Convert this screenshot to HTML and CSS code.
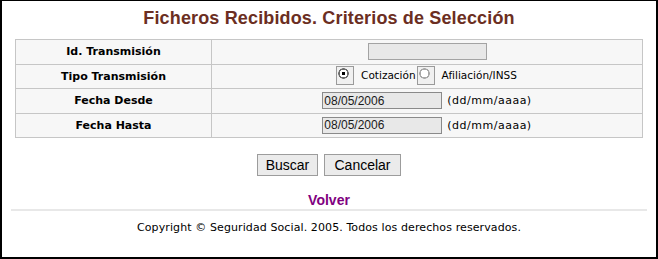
FILE: index.html
```html
<!DOCTYPE html>
<html lang="es">
<head>
<meta charset="utf-8">
<title>Ficheros Recibidos</title>
<link rel="stylesheet" href="styles.css">
</head>
<body>
<div class="frame">
  <h1 class="title">Ficheros Recibidos. Criterios de Selección</h1>
  <table class="criteria">
    <tr>
      <th class="label">Id. Transmisión</th>
      <td class="value"><input class="field field-id" type="text"></td>
    </tr>
    <tr>
      <th class="label">Tipo Transmisión</th>
      <td class="value">
        <span class="radios">
          <input class="radio" type="radio" name="tipo" checked><span class="opt">Cotización</span><input class="radio" type="radio" name="tipo"><span class="opt">Afiliación/INSS</span>
        </span>
      </td>
    </tr>
    <tr>
      <th class="label">Fecha Desde</th>
      <td class="value"><input class="field field-date" type="text" value="08/05/2006"><span class="hint">(dd/mm/aaaa)</span></td>
    </tr>
    <tr>
      <th class="label">Fecha Hasta</th>
      <td class="value"><input class="field field-date" type="text" value="08/05/2006"><span class="hint">(dd/mm/aaaa)</span></td>
    </tr>
  </table>
  <div class="actions">
    <button class="btn btn-buscar" type="button">Buscar</button>
    <button class="btn btn-cancelar" type="button">Cancelar</button>
  </div>
  <div class="back"><a class="back-link" href="#">Volver</a></div>
  <div class="rule"></div>
  <p class="copyright">Copyright © Seguridad Social. 2005. Todos los derechos reservados.</p>
</div>
</body>
</html>
```

FILE: styles.css
```css
html, body {
  margin: 0;
  padding: 0;
  background: #ffffff;
}

.frame {
  box-sizing: border-box;
  width: 658px;
  height: 259px;
  border-top: 1px solid #000;
  border-left: 2px solid #000;
  border-right: 2px solid #000;
  border-bottom: 2px solid #000;
  display: flex;
  flex-direction: column;
  align-items: center;
}

.title {
  margin: 7px 0 0 0;
  font-family: "Liberation Sans", Arial, sans-serif;
  font-size: 18px;
  font-weight: bold;
  line-height: 21px;
  letter-spacing: 0.15px;
  color: #6b2e22;
  text-align: center;
}

.criteria {
  margin-top: 10px;
  width: 628px;
  border-collapse: collapse;
  background: #f7f7f7;
  border: 1px solid #c6c6c6;
}

.criteria th,
.criteria td {
  border: 1px solid #c6c6c6;
  padding: 0;
  height: 23.5px;
  text-align: center;
  vertical-align: middle;
}

.label {
  width: 195px;
  font-family: "DejaVu Sans", Verdana, sans-serif;
  font-size: 11px;
  font-weight: bold;
  color: #000;
}

.value {
  font-family: "DejaVu Sans", Verdana, sans-serif;
  font-size: 10.5px;
  color: #000;
}

.field {
  box-sizing: border-box;
  margin: 0;
  height: 17px;
  background: #e8e8e8;
  border: 1px solid #a3a3a3;
  font-family: "Liberation Sans", Arial, sans-serif;
  font-size: 12px;
  color: #1a1a1a;
  padding: 0 1px;
  vertical-align: middle;
}

.field-id {
  width: 119px;
}

.field-date {
  width: 120px;
  border-color: #8a8a8a;
}

.hint {
  margin-left: 5px;
  font-size: 11px;
  letter-spacing: 0.5px;
  vertical-align: middle;
}

.radios {
  display: inline-flex;
  align-items: center;
}

.radio {
  appearance: none;
  -webkit-appearance: none;
  box-sizing: border-box;
  margin: 0;
  width: 18px;
  height: 19px;
  border: 1px solid #9a9a9a;
  background:
    radial-gradient(circle at 6.5px 6.5px, #ffffff 0 4px, #a8a8a8 4px 5px, transparent 5.5px),
    #f0f0f0;
}

.radio:checked {
  background:
    radial-gradient(circle at 6.5px 6.5px, #000 0 1.6px, #ffffff 2px 4px, #6c6c6c 4px 5px, transparent 5.5px),
    #f0f0f0;
}

.opt {
  margin-left: 7px;
  margin-right: 1px;
}

.actions {
  margin-top: 16px;
  display: flex;
  gap: 6px;
}

.btn {
  box-sizing: border-box;
  height: 22px;
  margin: 0;
  padding: 0;
  background: #ebebeb;
  border: 1px solid #9c9c9c;
  font-family: "Liberation Sans", Arial, sans-serif;
  font-size: 14px;
  color: #000;
}

.btn-buscar {
  width: 61px;
}

.btn-cancelar {
  width: 77px;
}

.back {
  margin-top: 16px;
  font-family: "Liberation Sans", Arial, sans-serif;
  font-size: 14px;
  font-weight: bold;
  line-height: 16px;
}

.back-link {
  color: #800080;
  text-decoration: none;
}

.rule {
  align-self: stretch;
  margin: 1px 9px 0 9px;
  height: 2px;
  background: #e8e8e8;
}

.copyright {
  margin: 10px 0 0 0;
  font-family: "DejaVu Sans", Verdana, sans-serif;
  font-size: 11px;
  line-height: 13px;
  letter-spacing: 0.1px;
  color: #000;
}
```
